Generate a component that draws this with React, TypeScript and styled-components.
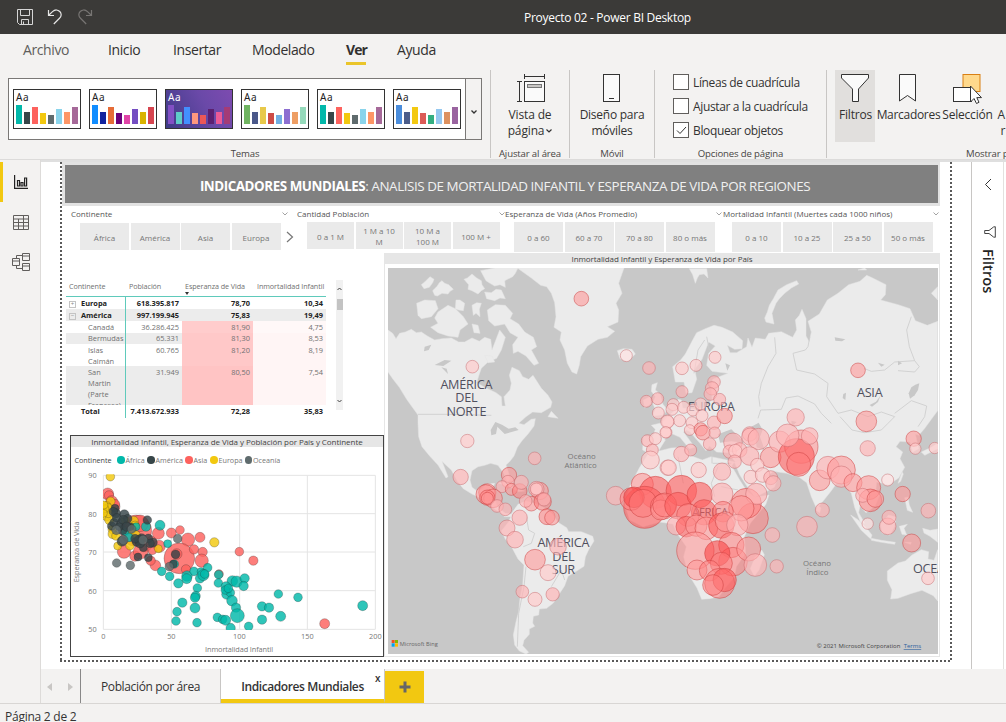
import React from "react";
import styled, { createGlobalStyle } from "styled-components";

const Global = createGlobalStyle`
  * { box-sizing: border-box; }
  body { margin: 0; background: #f3f2f1; font-family: "Open Sans", "Noto Sans", sans-serif; color: #333; overflow: hidden; }
`;

/* ---------- window chrome ---------- */
const Window = styled.div`
  width: 1006px; height: 722px; overflow: hidden; display: flex; flex-direction: column; background: #f3f2f1;
`;
const TitleBar = styled.header`
  height: 34px; flex: none; background: #3b3a38; display: flex; align-items: center; padding-left: 17px; gap: 14px; color: #fff;
`;
const WindowTitle = styled.div`
  margin-left: 417px; font-size: 12px; letter-spacing: -0.28px; white-space: nowrap; line-height: 16px; padding-top: 2px;
`;
const Tabs = styled.nav`
  height: 34px; flex: none; display: flex; padding-left: 23px;
`;
const Tab = styled.div<{ $w: number; $gap: number; $active?: boolean; $dim?: boolean }>`
  width: ${(p) => p.$w}px; margin-right: ${(p) => p.$gap}px; height: 31px; padding-top: 6px; font-size: 14px; line-height: 20px;
  letter-spacing: ${(p) => (p.$active ? -0.9 : -0.4)}px; white-space: nowrap; color: ${(p) => (p.$dim ? "#605e5c" : "#323130")};
  font-weight: ${(p) => (p.$active ? 700 : 400)};
  border-bottom: 3px solid ${(p) => (p.$active ? "#eac52a" : "transparent")};
`;

/* ---------- ribbon ---------- */
const Ribbon = styled.section`
  height: 92px; flex: none; display: flex; overflow: hidden; padding: 2px 0; border-bottom: 1px solid #dcdbda;
`;
const Group = styled.div<{ $w: number; $last?: boolean }>`
  width: ${(p) => p.$w}px; flex: none; height: 88px; display: flex; flex-direction: column; align-items: center;
  border-right: 1px solid ${(p) => (p.$last ? "transparent" : "#c8c6c4")};
`;
const GroupBody = styled.div<{ $pull?: number }>`
  height: 76px; flex: none; width: 100%; display: flex; justify-content: center; position: relative; left: ${(p) => p.$pull ?? 0}px;
`;
const GroupLabel = styled.div<{ $left?: number; $ls?: number }>`
  margin-top: 1px; font-size: 9.6px; line-height: 14px; letter-spacing: ${(p) => p.$ls ?? -0.15}px; white-space: nowrap; color: #484644;
  ${(p) => (p.$left ? `align-self: flex-start; margin-left: ${p.$left}px;` : "")}
`;
const Gallery = styled.div`
  margin: 8px 8px 0 8px; width: 474px; height: 62px; border: 1px solid #7a7876; background: #fff; display: flex;
`;
const GalleryCards = styled.div`
  width: 456px; display: flex; gap: 8px; padding: 10px 0 0 4px;
`;
const GalleryMore = styled.div`
  flex: 1; border-left: 1px solid #7a7876; background: #f3f2f1; display: flex; align-items: center; justify-content: center; padding-top: 6px;
`;
const Card = styled.div<{ $dark?: boolean }>`
  width: 68px; height: 40px; border: 1px solid #333; display: flex; flex-direction: column; padding: 1px 2px 4px;
  background: ${(p) => (p.$dark ? "linear-gradient(60deg,#3d3a86,#6a49a8 60%,#7d4bb0)" : "#fff")};
  color: ${(p) => (p.$dark ? "#fff" : "#222")};
`;
const CardText = styled.div`
  font-size: 10px; line-height: 13px; height: 12px; letter-spacing: 0.7px; font-family: "Noto Sans", sans-serif;
`;
const CardBars = styled.div`
  flex: 1; display: flex; align-items: flex-end; gap: 2px;
`;
const CardBar = styled.div<{ $h: number; $c: string }>`
  width: 6px; height: ${(p) => p.$h}px; background: ${(p) => p.$c};
`;
const BigButton = styled.div<{ $w: number; $active?: boolean; $ml?: number }>`
  width: ${(p) => p.$w}px; margin-left: ${(p) => p.$ml ?? 0}px; height: 72px; flex: none; display: flex; flex-direction: column; align-items: center;
  background: ${(p) => (p.$active ? "#e1dfdd" : "transparent")};
  > svg { flex: none; }
`;
const BigLabel = styled.div<{ $ls?: number }>`
  margin-top: 1px; font-size: 12px; line-height: 16px; letter-spacing: ${(p) => p.$ls ?? -0.15}px; text-align: center; white-space: pre; color: #323130;
  svg { vertical-align: 2px; margin-left: -1px; }
`;
const Checks = styled.div`
  width: 100%; padding: 4px 0 0 18px; display: flex; flex-direction: column; gap: 8px;
`;
const CheckRow = styled.div<{ $ls: number }>`
  display: flex; align-items: center; gap: 4px; height: 16px; font-size: 12px; letter-spacing: ${(p) => p.$ls}px; white-space: nowrap;
`;
const CheckBox = styled.span`
  width: 16px; height: 16px; border: 1px solid #605e5c; background: #fff; display: flex; align-items: center; justify-content: center;
`;
const Clip = styled.div`
  flex: none; white-space: pre; font-size: 12px; line-height: 16px; padding-top: 37px; margin-left: 4px;
`;

/* ---------- body ---------- */
const Body = styled.div`
  height: 544px; flex: none; display: flex; border-bottom: 1px solid #d8d6d4;
`;
const Rail = styled.aside`
  width: 41px; flex: none; border-right: 1px solid #dddbd9; display: flex; flex-direction: column; padding-top: 2px;
`;
const RailItem = styled.div<{ $active?: boolean }>`
  height: 40px; display: flex; align-items: center; justify-content: center; padding-right: 3px;
  border-left: 3px solid ${(p) => (p.$active ? "#f2c811" : "transparent")};
  padding-left: 2px;
`;
const Content = styled.div`
  flex: 1; min-width: 0; display: flex; flex-direction: column;
`;
const Work = styled.div`
  height: 509px; display: flex; background: #fff; border-top: 2px solid #dfdfdf;
`;
const Stage = styled.div`
  width: 930px; flex: none; padding-left: 19px;
`;
const PageFrame = styled.div`
  width: 892px; height: 500px; padding: 0 12px 0 2px; display: flex; flex-direction: column;
  background:
    repeating-linear-gradient(180deg, #5a5a5a 0 2px, transparent 2px 4px) left top / 2px 100% no-repeat,
    repeating-linear-gradient(180deg, #5a5a5a 0 2px, transparent 2px 4px) right top / 2px 100% no-repeat,
    repeating-linear-gradient(90deg, #5a5a5a 0 2px, transparent 2px 4px) left bottom / 100% 2px no-repeat;
`;
const BannerBox = styled.div`
  height: 44px; flex: none; background: #e2e2e2; padding: 3px 2px 3px 3px;
`;
const Banner = styled.h1`
  margin: 0; height: 38px; background: #808080; color: #f0f0f0; font-size: 13.4px; font-weight: 400; text-align: center; line-height: 43px;
  letter-spacing: -0.43px; white-space: nowrap; padding-left: 7px;
  b { font-weight: 700; color: #fff; letter-spacing: -0.45px; }
`;
const Slicers = styled.div`
  height: 47px; flex: none; display: flex;
`;
const Slicer = styled.div<{ $w: number }>`
  width: ${(p) => p.$w}px; flex: none; display: flex; flex-direction: column;
`;
const SlicerHead = styled.div<{ $pl: number; $pr: number }>`
  height: 16px; display: flex; justify-content: space-between; align-items: center; padding: 0 ${(p) => p.$pr}px 0 ${(p) => p.$pl}px;
  font-size: 8px; line-height: 16px; white-space: nowrap; color: #555;
`;
const Chips = styled.div<{ $ml: number; $h: number; $mt?: number }>`
  margin: ${(p) => p.$mt ?? 0}px 0 0 ${(p) => p.$ml}px; height: ${(p) => p.$h}px; display: flex; align-items: center; gap: 1.5px;
`;
const Chip = styled.div<{ $w: number }>`
  width: ${(p) => p.$w}px; flex: none; height: 100%; background: #eaeaea; color: #777; font-size: 8px; line-height: 11px; white-space: pre; text-align: center;
  display: flex; align-items: center; justify-content: center; padding-top: 1px;
`;
const Lower = styled.div`
  flex: 1; display: flex;
`;
const LeftCol = styled.div`
  width: 322px; flex: none; display: flex; flex-direction: column; padding: 27px 0 0 4px;
`;

/* ---------- matrix ---------- */
const MatrixBox = styled.div`
  height: 155px; display: flex; gap: 10px;
`;
const Matrix = styled.div`
  width: 260px; height: 138px; display: flex; flex-direction: column;
`;
const MatrixRows = styled.div`
  height: 108px; flex: none; overflow: hidden;
`;
const MRow = styled.div<{ $h: number; $kind?: "head" | "bold" | "total"; $alt?: boolean }>`
  height: ${(p) => p.$h}px; flex: none; display: grid; grid-template-columns: 60px 56px 71px 73px; line-height: 11px;
  font-size: ${(p) => (p.$kind === "head" ? 7.2 : 7.4)}px;
  letter-spacing: ${(p) => (p.$kind === "head" ? -0.07 : 0)}px;
  color: ${(p) => (p.$kind === "bold" || p.$kind === "total" ? "#222" : "#707070")};
  font-weight: ${(p) => (p.$kind === "bold" || p.$kind === "total" ? 700 : 400)};
  border-bottom: ${(p) => (p.$kind === "head" ? "1px solid #5fcabb" : "0")};
  background: ${(p) => (p.$alt ? "#ececec" : "transparent")};
`;
const Cell = styled.div<{ $heat?: string; $name?: boolean; $pl?: number; $head?: boolean }>`
  text-align: ${(p) => (p.$name || p.$head ? "left" : "right")}; white-space: pre; background: ${(p) => p.$heat ?? "transparent"};
  padding: 0.5px ${(p) => (p.$head ? 0 : 3)}px 0 ${(p) => p.$pl ?? 0}px;
  border-right: ${(p) => (p.$name ? "1px solid #5fcabb" : "0")};
  display: ${(p) => (p.$name ? "flex" : "block")}; gap: 5px;
`;
const Expander = styled.span`
  width: 7px; height: 7px; margin-top: 3px; border: 1px solid #c4c4c4; font-size: 6px; line-height: 4.5px; color: #888; text-align: center; font-weight: 400;
`;
const SortMark = styled.div`
  width: 0; height: 0; border: 2px solid transparent; border-top: 3px solid #333; border-bottom: 0;
`;
const ScrollBar = styled.div`
  width: 7px; height: 130px; background: #f1f1f1; display: flex; flex-direction: column; align-items: center; padding: 7px 0 7px; gap: 8px;
`;
const Thumb = styled.div`
  width: 6px; height: 11px; background: #c3c3c3; margin-bottom: auto;
`;

/* ---------- charts ---------- */
const VisualTitle = styled.div<{ $ls?: number }>`
  height: 11px; flex: none; background: #e6e6e6; text-align: center; font-size: 8px; line-height: 12px; color: #444; white-space: nowrap; letter-spacing: ${(p) => p.$ls ?? 0}px;
`;
const ScatterBox = styled.div`
  margin-left: 4px; width: 314px; height: 222px; border: 1px solid #444; display: flex; flex-direction: column; background: #fff;
`;
const Legend = styled.div`
  height: 21px; padding: 5px 0 0 3.5px; display: flex; align-items: center; font-size: 7.2px; color: #777; line-height: 12px;
  b { font-weight: 400; width: 42.5px; color: #444; font-size: 7.2px; }
`;
const LegendItem = styled.span<{ $c: string; $w: number }>`
  width: ${(p) => p.$w}px; display: flex; align-items: center; gap: 1px; white-space: nowrap;
  &::before { content: ""; width: 7.5px; height: 7.5px; border-radius: 50%; background: ${(p) => p.$c}; flex: none; }
`;
const MapBox = styled.div`
  width: 556px; height: 404px; display: flex; flex-direction: column; border: 1px solid #e6e6e6; border-top: 0;
  svg { margin: 3.5px 0 0 2.5px; }
`;

/* ---------- filter pane, page tabs, status ---------- */
const FilterPane = styled.div`
  width: 33px; border-left: 1px solid #c8c6c4; border-right: 1px solid #e3e1df; display: flex; flex-direction: column; align-items: center; padding-top: 16px;
`;
const Funnel = styled.svg`
  margin: 35px 0 0 4px; flex: none;
`;
const FilterTitle = styled.div`
  writing-mode: vertical-rl; font-size: 14.5px; font-weight: 600; line-height: 18px; margin-top: 11px; letter-spacing: 0.1px; color: #252423;
`;
const PageTabs = styled.div`
  height: 34px; display: flex;
`;
const Arrows = styled.div`
  width: 40px; border-right: 1px solid #888; display: flex; align-items: center; justify-content: space-between; padding: 2px 6px 0 5px;
`;
const PageTab = styled.div<{ $w: number; $active?: boolean }>`
  width: ${(p) => p.$w}px; position: relative; display: flex; align-items: center; justify-content: center; font-size: 12px; white-space: nowrap;
  padding-top: ${(p) => (p.$active ? 4 : 1)}px;
  letter-spacing: ${(p) => (p.$active ? -0.4 : -0.35)}px; font-weight: ${(p) => (p.$active ? 600 : 400)};
  background: ${(p) => (p.$active ? "#fff" : "#f3f2f1")}; border-right: 1px solid #c8c6c4;
  border-bottom: ${(p) => (p.$active ? "4px solid #f2c811" : "0")};
`;
const CloseMark = styled.span`
  position: absolute; right: 4px; top: 2px; font-size: 10px; line-height: 14px; font-weight: 600;
`;
const AddPage = styled.div`
  width: 39px; height: 32px; margin-top: 2px; background: #f2c811; display: flex; align-items: center; justify-content: center;
`;
const Status = styled.footer`
  height: 18px; padding: 4px 0 0 5px; font-size: 12px; line-height: 18px; letter-spacing: -0.25px; white-space: nowrap;
`;

/* ---------- data ---------- */
const heights = [19, 12, 17, 11, 9, 15, 12, 17];
const themes: { c: string[]; dark?: boolean }[] = [
  { c: ["#01b8aa", "#374649", "#fd625e", "#f2c80f", "#5f6b6d", "#8ad4eb", "#fe9666", "#a66999"] },
  { c: ["#118dff", "#12239e", "#e66c37", "#6b007b", "#e044a7", "#744ec2", "#d9b300", "#d64550"] },
  { c: ["#8250c4", "#5ecbc8", "#438fff", "#ff977e", "#eb5757", "#5b2071", "#ec5a96", "#a43b76"], dark: true },
  { c: ["#70b461", "#4a588a", "#e8c94a", "#cd4c46", "#71afe2", "#8d6fd1", "#ee9e64", "#95dabb"] },
  { c: ["#01b8aa", "#374649", "#fd625e", "#f2c80f", "#5f6b6d", "#8ad4eb", "#fe9666", "#a66999"] },
  { c: ["#4a8ddc", "#4c5d8a", "#f3c911", "#dc5b57", "#33ae81", "#95c8f0", "#dd915f", "#9a64a0"] },
];

type Pt = [number, number, number];
const teal = "#01b8aa", dark = "#374649", red = "#fd625e", yellow = "#f2c80f", grey = "#5f6b6d";
const scatter: { c: string; p: Pt[] }[] = [
  { c: red, p: [[143, 192, 18], [147, 196, 14], [155, 215, 18], [160, 230, 20], [165, 222, 14], [228, 302, 47], [240, 280, 25], [192, 365, 20], [225, 378, 16], [256, 345, 20], [275, 335, 16], [295, 310, 18], [298, 349, 18], [286, 406, 16], [272, 392, 14], [334, 309, 15], [360, 300, 13], [384, 329, 20], [420, 322, 15], [358, 385, 46], [402, 358, 14], [428, 366, 14], [425, 392, 20], [378, 418, 14], [538, 365, 13], [580, 392, 14], [794, 581, 15], [277, 360, 14], [477, 432, 13], [242, 365, 22], [350, 372, 16]] },
  { c: yellow, p: [[151, 140, 13], [152, 214, 13], [140, 228, 13], [136, 245, 13], [145, 235, 14], [140, 260, 13], [148, 270, 14], [145, 250, 13], [135, 236, 12], [157, 298, 13], [158, 312, 14], [168, 318, 13], [173, 348, 12], [222, 272, 13], [215, 300, 13], [228, 315, 13], [210, 347, 13], [295, 356, 12], [463, 337, 14], [225, 285, 12], [195, 270, 12], [130, 250, 12], [132, 225, 12]] },
  { c: teal, p: [[300, 286, 15], [258, 290, 14], [228, 290, 12], [195, 305, 12], [207, 322, 13], [323, 341, 12], [305, 424, 13], [329, 439, 13], [381, 438, 16], [380, 446, 15], [402, 424, 13], [343, 402, 13], [355, 460, 14], [412, 474, 13], [420, 445, 14], [423, 425, 12], [443, 413, 13], [430, 435, 17], [434, 432, 13], [407, 498, 14], [405, 503, 14], [367, 518, 14], [351, 545, 13], [348, 573, 13], [405, 534, 15], [411, 578, 13], [476, 434, 13], [475, 459, 13], [517, 453, 16], [530, 455, 17], [554, 445, 14], [551, 468, 14], [498, 470, 15], [500, 493, 15], [511, 488, 13], [516, 512, 16], [528, 533, 14], [532, 557, 21], [472, 562, 13], [488, 568, 13], [497, 571, 15], [512, 594, 14], [566, 589, 13], [606, 569, 14], [606, 529, 14], [627, 533, 14], [655, 492, 13], [714, 502, 13], [662, 559, 15], [908, 527, 15], [496, 480, 13], [505, 475, 13]] },
  { c: dark, p: [[165, 235, 12], [168, 250, 14], [160, 245, 13], [193, 253, 14], [203, 266, 13], [155, 288, 13], [162, 278, 13], [185, 280, 15], [170, 263, 13], [188, 300, 14], [210, 290, 12], [186, 334, 15], [190, 270, 14], [262, 270, 13], [245, 325, 14], [230, 335, 14], [238, 330, 15], [278, 338, 14], [250, 353, 12], [265, 325, 13], [234, 381, 12], [265, 383, 12], [347, 373, 13], [340, 402, 12], [178, 290, 12], [240, 340, 14], [270, 340, 13], [225, 326, 13], [200, 290, 14]] },
  { c: grey, p: [[353, 326, 13], [170, 399, 13], [211, 406, 13], [169, 300, 14], [215, 297, 13], [328, 410, 13], [249, 330, 14], [190, 330, 14]] },
];

/* Bubbles of the map: x, y, radius, shade. */
type Bubble = [number, number, number, number];
const at = (dx: number, dy: number, list: Bubble[]): Bubble[] => list.map(([x, y, r, o]) => [x + dx, y + dy, r, o]);
const bubbles: Bubble[] = [
  ...at(0, 0, [[590, 146, 22, 3], [725, 317, 18, 0], [793, 354, 19, 2], [263, 350, 19, 1], [248, 573, 20, 1], [450, 625, 19, 2], [785, 454, 18, 2], [819, 446, 18, 2], [821, 489, 18, 1], [849, 515, 18, 1], [845, 547, 17, 1], [788, 572, 18, 2], [812, 566, 18, 1], [803, 600, 18, 2], [797, 630, 27, 1]]),
  ...at(0, 615, [[228, 66, 23, 2], [373, 60, 23, 3], [370, 80, 19, 2], [352, 95, 18, 2], [380, 103, 18, 3], [405, 108, 22, 4], [410, 82, 21, 2], [465, 108, 26, 3], [455, 102, 23, 2], [440, 146, 22, 3], [474, 140, 26, 4], [455, 102, 18, 1], [478, 133, 20, 2], [423, 138, 19, 2], [308, 112, 26, 4], [303, 118, 29, 3], [325, 130, 28, 3], [308, 128, 23, 4], [308, 130, 18, 3], [337, 153, 19, 2], [362, 163, 19, 2], [405, 188, 23, 2], [367, 219, 24, 2], [391, 254, 25, 2], [487, 185, 24, 4], [502, 188, 22, 3], [520, 275, 25, 2], [451, 314, 31, 3], [490, 353, 24, 1], [413, 410, 19, 2], [451, 433, 21, 1], [504, 418, 20, 2], [849, 38, 23, 1], [693, 122, 28, 2], [773, 88, 33, 3], [812, 112, 48, 5], [780, 157, 63, 5], [740, 132, 34, 4], [748, 127, 31, 6], [775, 145, 42, 4], [835, 155, 38, 4], [828, 165, 30, 3]]),
  ...at(840, 0, [[52, 355, 19, 1], [94, 346, 18, 1], [151, 322, 18, 1], [148, 396, 19, 2], [142, 415, 20, 2], [137, 432, 19, 2], [52, 425, 18, 2], [165, 448, 18, 2], [26, 464, 18, 1], [22, 478, 18, 1], [57, 472, 18, 1], [85, 480, 18, 1], [45, 512, 18, 1], [8, 515, 20, 1], [82, 518, 18, 1], [3, 547, 17, 1], [75, 540, 16, 1], [112, 497, 18, 1], [108, 462, 18, 1], [148, 518, 20, 2], [180, 498, 23, 3], [108, 538, 20, 3], [115, 548, 22, 3], [150, 548, 17, 2], [135, 582, 19, 2], [50, 612, 23, 2], [78, 600, 18, 2], [205, 577, 28, 2], [195, 605, 20, 2], [225, 600, 22, 2], [212, 603, 20, 1], [255, 552, 22, 2], [257, 560, 26, 2], [282, 567, 32, 2], [255, 618, 28, 2], [318, 622, 31, 3], [345, 575, 32, 2], [410, 590, 50, 3], [395, 620, 54, 5], [369, 556, 34, 2], [435, 558, 25, 2], [402, 643, 36, 4], [393, 502, 26, 2], [605, 514, 31, 3], [609, 595, 23, 2], [580, 361, 22, 3], [747, 566, 23, 3], [752, 596, 17, 1], [810, 594, 17, 1]]),
  ...at(840, 615, [[12, 38, 23, 1], [102, 45, 23, 1], [172, 50, 26, 2], [210, 20, 20, 2], [278, 30, 20, 1], [258, 66, 20, 1], [294, 60, 22, 1], [318, 68, 21, 2], [326, 85, 23, 2], [465, 76, 31, 3], [490, 38, 34, 2], [530, 45, 42, 3], [530, 65, 32, 2], [565, 83, 27, 3], [612, 98, 36, 3], [617, 136, 34, 4], [594, 121, 21, 2], [632, 132, 25, 3], [669, 75, 18, 0], [714, 117, 23, 3], [791, 167, 22, 2], [473, 165, 21, 2], [427, 215, 31, 2], [323, 240, 22, 2], [336, 334, 20, 2], [669, 214, 25, 2], [673, 187, 21, 2], [609, 206, 17, 0], [741, 264, 27, 3], [790, 370, 19, 1],
    [50, 107, 46, 5], [0, 150, 36, 4], [40, 152, 40, 5], [105, 120, 38, 5], [172, 117, 33, 2], [265, 190, 46, 4], [245, 145, 45, 4], [275, 117, 32, 2], [230, 160, 38, 3], [118, 172, 38, 5], [70, 180, 34, 4], [175, 170, 31, 4], [35, 212, 28, 2], [65, 215, 31, 5], [95, 212, 32, 3], [125, 220, 34, 3], [170, 212, 38, 5], [182, 200, 30, 3], [218, 210, 32, 2], [92, 287, 56, 3], [200, 270, 38, 4], [205, 320, 43, 4], [158, 295, 38, 6], [170, 325, 33, 4], [252, 282, 36, 3], [272, 330, 34, 2], [97, 345, 30, 3], [135, 347, 31, 4], [165, 385, 45, 4], [180, 375, 35, 5], [145, 390, 31, 4]]),
];
const shades: [string, number][] = [
  ["#ffe2e2", 0.7], ["#ffcccc", 0.7], ["#ffb2b4", 0.65], ["#ff9a9a", 0.6], ["#ff7e7e", 0.55], ["#ff5c5c", 0.6], ["#fb4444", 0.6],
];

/* Coastlines, each group drawn from its own corner of the world. */
const land: { dx: number; dy: number; d: string[] }[] = [
  {
    dx: 0, dy: 0,
    d: [
      "M10 240 L24 250 34 266 45 250 62 246 80 238 95 248 110 246 128 258 150 270 172 266 200 264 222 276 240 276 262 264 284 274 300 262 318 268 322 300 345 240 362 262 350 300 336 325 310 336 290 355 282 378 276 398 300 412 334 428 350 440 352 468 362 468 358 440 376 420 380 400 374 376 382 352 404 362 414 380 432 388 445 376 458 396 470 415 490 436 502 456 498 472 470 488 444 486 424 500 402 520 418 524 440 508 452 506 448 528 430 552 412 572 398 592 388 618 374 636 364 645 372 668 376 688 368 694 356 668 340 646 318 640 300 646 280 650 262 662 256 690 262 712 276 722 292 716 304 702 330 700 320 724 312 735 330 750 340 772 362 790 380 792 396 770 388 800 360 800 338 782 314 766 292 746 262 732 236 716 218 694 200 660 178 640 172 634 190 680 184 684 160 645 135 618 112 590 102 560 100 520 100 495 82 470 66 448 44 412 24 386 10 366 Z",
      "M398 54 L440 84 468 106 486 110 500 130 510 158 514 200 508 232 530 246 526 270 540 300 548 340 562 366 576 372 584 345 588 320 608 288 640 268 668 262 690 244 668 230 700 216 702 180 694 160 712 130 702 100 718 54 Z",
      "M96 160 L120 150 152 152 160 176 140 200 110 206 100 196 Z",
      "M160 186 L190 166 212 176 236 200 250 222 226 240 220 262 190 258 160 248 138 232 160 220 150 204 Z",
      "M110 104 L120 96 136 80 148 88 144 98 134 112 118 116 Z M144 122 L158 108 164 98 172 92 180 100 192 104 206 118 196 124 190 132 172 130 158 138 150 136 Z M238 88 L248 84 262 72 276 84 290 92 292 104 300 116 290 122 280 132 262 122 250 118 252 104 Z M214 150 L226 150 240 160 236 182 222 180 212 176 Z M262 166 L276 158 290 160 284 178 286 200 274 190 266 196 Z",
      "M288 62 L330 54 400 54 392 70 384 80 360 92 362 112 346 104 330 108 316 100 304 92 Z M300 126 L320 128 334 118 350 120 362 146 346 144 330 152 306 146 Z",
      "M308 180 L332 164 362 166 384 190 376 206 402 222 420 246 446 262 456 290 440 300 462 340 448 346 424 318 400 304 386 310 384 284 400 262 376 248 360 222 330 228 312 212 Z",
      "M262 222 L280 226 286 250 268 248 Z M300 316 L322 318 330 336 310 338 Z M490 500 L500 484 520 505 Z",
      "M698 302 L716 296 742 298 752 312 730 334 706 326 Z",
      "M802 404 L818 398 812 420 826 432 834 462 848 478 838 494 804 498 812 478 804 460 812 440 800 424 Z M776 450 L796 440 798 462 780 474 Z",
    ],
  },
  {
    dx: 0, dy: 615,
    d: [
      "M385 170 L400 148 424 138 452 146 480 158 502 176 520 202 546 218 552 230 590 230 624 244 628 258 612 284 602 306 598 334 570 352 550 364 540 392 518 426 506 444 486 460 464 462 462 480 446 484 444 504 450 514 434 522 434 538 418 556 414 572 432 592 424 597 404 588 390 570 386 540 394 500 402 470 406 430 414 390 418 330 400 312 382 278 362 252 350 228 372 200 Z",
      "M340 84 L366 82 400 100 420 108 400 110 372 94 Z",
    ],
  },
  {
    dx: 840, dy: 0,
    d: [
      "M24 350 L48 330 62 312 84 270 96 248 122 236 148 226 172 232 204 246 234 272 232 296 210 298 188 286 196 308 216 308 246 290 250 264 262 292 272 264 302 268 312 250 350 245 384 262 396 240 392 210 404 196 412 178 424 206 424 258 434 276 440 246 430 214 464 192 488 150 520 130 552 104 586 94 606 76 624 84 664 104 662 134 648 150 700 164 736 176 752 212 788 226 819 214 819 482 800 508 778 538 762 556 752 552 762 596 744 606 736 576 706 574 694 590 714 606 706 626 720 652 702 684 672 704 636 696 634 716 644 738 630 770 604 788 586 768 582 788 600 820 588 818 570 772 560 730 536 702 516 700 500 722 470 760 456 776 440 740 426 698 404 682 366 670 326 664 304 682 270 650 245 632 212 635 190 608 156 606 134 588 124 602 106 580 90 562 76 545 66 540 56 546 76 572 90 592 74 596 46 562 24 552 0 568 -36 562 -28 538 -40 526 -8 518 18 492 38 474 40 448 50 450 54 474 96 478 126 470 142 446 140 412 144 388 190 370 142 364 126 346 132 310 152 288 132 276 112 328 90 358 96 388 82 428 64 430 58 396 32 396 Z",
      "M-64 558 L-10 562 2 570 -18 602 -50 608 -66 600 Z",
      "M304 216 L300 204 308 186 314 166 326 146 340 120 366 104 396 92 402 102 380 114 360 130 344 146 334 160 322 190 328 222 Z",
      "M74 56 L84 74 92 100 98 84 104 74 118 72 130 84 126 56 Z M800 130 L819 110 819 150 Z M580 60 L600 54 606 60 Z",
      "M770 606 L800 592 819 580 819 596 780 616 Z M700 700 L712 666 716 672 708 694 Z",
    ],
  },
  {
    dx: 765, dy: 390,
    d: [
      "M30 215 L62 212 94 204 140 202 150 226 188 240 214 230 262 240 284 246 276 258 300 300 322 334 346 352 388 345 378 374 332 430 314 470 318 520 290 560 284 592 258 622 238 650 210 656 186 658 172 624 146 582 132 530 140 500 112 460 100 432 60 426 10 440 -30 420 -46 370 -30 320 0 262 Z",
      "M284 246 L330 230 350 262 384 285 410 305 404 322 370 340 346 352 324 322 300 284 Z",
      "M366 510 L374 524 358 570 344 588 332 566 346 532 Z",
      "M532 374 L544 384 540 398 530 392 Z",
    ],
  },
  {
    dx: 840, dy: 615,
    d: [
      "M668 348 L700 324 722 318 742 300 770 284 792 290 790 312 808 316 819 284 819 438 806 422 772 406 738 416 700 430 678 432 682 404 668 376 Z",
      "M558 180 L580 194 606 220 622 240 618 252 590 226 Z M620 250 L650 256 692 262 690 268 650 262 620 256 Z M648 206 L672 180 694 186 690 214 676 240 652 234 Z M704 214 L728 208 718 220 726 240 712 238 Z M774 220 L796 226 819 222 819 262 796 244 778 234 Z M720 128 L730 126 734 150 744 172 728 166 Z M720 262 L740 262 738 268 Z",
    ],
  },
];
const seas = [
  "M1000 553 L1020 545 1040 538 1062 560 1078 578 1040 574 1006 578 Z",
  "M1100 530 L1122 518 1134 540 1126 560 1140 600 1116 592 1112 560 Z",
  "M1580 412 L1592 404 1604 400 1600 420 1590 436 1576 446 1572 430 Z",
  "M1455 465 L1474 455 1488 436 1480 456 1462 470 Z",
  "M318 540 L332 516 352 524 372 536 392 532 402 540 360 552 338 530 334 552 320 556 Z",
  "M120 290 L140 284 132 300 118 304 Z M150 345 L180 330 200 332 176 348 Z M190 372 L170 352 186 356 Z",
  "M1350 262 L1382 268 1372 274 1352 272 Z M1376 432 L1384 428 1382 450 1374 444 Z M1022 340 L1036 346 1028 362 Z M1220 512 L1236 516 1222 528 Z",
  "M1480 338 L1500 344 1490 350 Z M1540 332 L1552 340 1540 346 Z",
];
const borders = [
  "M100 493 H190 L320 496",
  "M1120 505 L1128 480 1190 478 1204 444 1240 438 1290 462 1310 490 1340 520",
  "M1225 310 L1262 300 1270 290 1275 262",
  "M1225 310 L1236 360 1290 372 1330 400 1326 440 1360 490 1400 480 1450 500 1490 486 1530 500 1510 520 1490 540 1440 548 1402 540 1366 500",
  "M1580 200 L1566 240 1574 290 1590 332 1530 336 1500 360 1460 364 1440 356",
  "M1590 332 L1604 350 1590 366 1540 362",
  "M1530 490 L1580 452 1626 468 1620 500 1600 530",
  "M1170 262 L1174 310 1150 350 1130 400 1122 440 1126 470",
  "M966 260 L974 300 M928 370 L940 300 960 270 M982 600 V640 M880 620 L896 700 M984 640 H1040",
  "M425 800 L432 840 450 850 440 880 416 890 M424 950 L418 1010 402 1090 398 1190 M500 1010 L530 960 540 990",
  "M1010 710 L1060 720 M1000 650 L980 700 990 740",
];

const columns = ["Continente", "Población", "Esperanza de Vida", "Inmortalidad Infantil"];
const rows: { n: string; h: number; v: string[]; bold?: "+" | "−"; alt?: boolean; heat?: [string, string] }[] = [
  { n: "Europa", h: 12, v: ["618.395.817", "78,70", "10,34"], bold: "+" },
  { n: "América", h: 12, v: ["997.199.945", "75,83", "19,49"], bold: "−", alt: true },
  { n: "Canadá", h: 11.5, v: ["36.286.425", "81,90", "4,75"], heat: ["#ffcccc", "#fff8f8"] },
  { n: "Bermudas", h: 11.5, v: ["65.331", "81,30", "8,53"], alt: true, heat: ["#ffc8c8", "#fff5f5"] },
  { n: "Islas\nCaimán", h: 22, v: ["60.765", "81,20", "8,19"], heat: ["#ffc8c8", "#fff5f5"] },
  { n: "San\nMartin\n(Parte\nFrancesa)", h: 44, v: ["31.949", "80,50", "7,54"], alt: true, heat: ["#ffc4c4", "#fff5f5"] },
];

/* ---------- small drawings ---------- */
const Chevron = ({ w = 6, c = "#888", sw = 0.9 }: { w?: number; c?: string; sw?: number }) => (
  <svg width={w} height={w / 2 + 1} viewBox="0 0 6 4" fill="none" stroke={c} strokeWidth={sw}><path d="M0.5 0.5 L3 3 L5.5 0.5" /></svg>
);
const SaveIcon = () => (
  <svg width="16" height="16" viewBox="0 0 16 16" fill="none" stroke="#d6d6d6"><path d="M.5.5H15.500V15.500H2.500L.5 13.500ZM3.500.5V6.500H12.500V.5M4.500 15V10.500H11.500V15M6.500 12.500V15" /></svg>
);
const UndoIcon = ({ flip }: { flip?: boolean }) => (
  <svg width="16" height="16" viewBox="0 0 16 16" fill="none" stroke={flip ? "#777573" : "#e6e6e6"} strokeWidth="1.200">
    <g transform={flip ? "translate(16 0) scale(-1 1)" : undefined}><path d="M1.500 1V6.500H7M1.700 6.300L5.500 2.600C8 .3 11 .6 12.800 2.500C14.800 4.600 14.500 7.500 12.500 9.300L6.800 15" /></g>
  </svg>
);

function MapView() {
  return (
    <svg width="550" height="386" viewBox="10 54 1650 1158" preserveAspectRatio="none">
      <rect x="10" y="54" width="1650" height="1158" fill="#c8c8c8" />
      {land.map((g, i) => (
        <g key={i} transform={`translate(${g.dx} ${g.dy})`} fill="#ebebeb" stroke="#e4e4e4" strokeWidth="1.500" strokeLinejoin="round">
          {g.d.map((d, j) => <path key={j} d={d} />)}
        </g>
      ))}
      {seas.map((d, i) => <path key={i} d={d} fill="#c8c8c8" />)}
      {borders.map((d, i) => <path key={i} d={d} fill="none" stroke="#cccccc" strokeWidth="2.500" />)}
      <g fill="#50505e" textAnchor="middle" fontSize="38" letterSpacing="-0.800">
        <text x="245" y="417">AMÉRICA</text><text x="245" y="457">DEL</text><text x="245" y="497">NORTE</text>
        <text x="536" y="892">AMÉRICA</text><text x="536" y="932">DEL</text><text x="536" y="972">SUR</text>
        <text x="980" y="482" fontSize="37">EUROPA</text><text x="1455" y="441">ASIA</text>
        <text x="976" y="798" fontSize="34">ÁFRICA</text>
        <text x="1585" y="969" textAnchor="start">OCEANÍA</text>
      </g>
      <g fill="#777" textAnchor="middle" fontSize="23.500">
        <text x="591" y="626">Océano</text><text x="588" y="654">Atlántico</text>
        <text x="1297" y="948">Océano</text><text x="1298" y="975">Índico</text>
      </g>
      {bubbles.map(([x, y, r, o], i) => (
        <circle key={i} cx={x} cy={y} r={r} fill={shades[o][0]} fillOpacity={shades[o][1]} stroke={o < 3 ? "#c4686c" : "#c93c3c"} strokeOpacity="0.600" strokeWidth="2.400" />
      ))}
      <rect x="21" y="1170" width="9" height="9" fill="#f25022" /><rect x="31" y="1170" width="9" height="9" fill="#7fba00" />
      <rect x="21" y="1180" width="9" height="10" fill="#00a4ef" /><rect x="31" y="1180" width="9" height="10" fill="#ffb900" />
      <text x="45" y="1188" fontSize="17" fill="#666">Microsoft Bing</text>
      <text x="1296" y="1194" fontSize="18" fill="#444">© 2021 Microsoft Corporation</text>
      <text x="1557" y="1194" fontSize="18" fill="#2c5f9e" textDecoration="underline">Terms</text>
    </svg>
  );
}

function ScatterPlot() {
  return (
    <svg width="312" height="187" viewBox="33 114 936 561">
      <clipPath id="plot"><rect x="129" y="133" width="820" height="467" /></clipPath>
      <g stroke="#e4e4e4" strokeWidth="3">
        {[136, 251, 366, 482, 598].map((y) => <path key={y} d={`M130 ${y}H946`} />)}
        {[130, 334, 539, 742, 946].map((x) => <path key={x} d={`M${x} 136V598`} />)}
      </g>
      <g clipPath="url(#plot)">
        {scatter.map((s) => s.p.map(([x, y, r], i) => (
          <circle key={s.c + i} cx={x} cy={y} r={r} fill={s.c} fillOpacity="0.820" stroke="#222" strokeOpacity="0.350" strokeWidth="2.200" />
        )))}
      </g>
      <g fill="#777" fontSize="22">
        {[90, 80, 70, 60, 50].map((v, i) => <text key={v} x="110" y={144 + i * 115.5} textAnchor="end">{v}</text>)}
        {[0, 50, 100, 150, 200].map((v, i) => <text key={v} x={130 + i * 204} y="627" textAnchor="middle">{v}</text>)}
        <text x="537" y="667" textAnchor="middle" letterSpacing="-0.300">Inmortalidad Infantil</text>
        <text transform="translate(58 366) rotate(-90)" textAnchor="middle" letterSpacing="-0.300">Esperanza de Vida</text>
      </g>
    </svg>
  );
}

function SlicerView(p: { w: number; title: string; pl: number; pr: number; ml: number; h: number; mt?: number; chips: [string, number][]; more?: boolean }) {
  return (
    <Slicer $w={p.w}>
      <SlicerHead $pl={p.pl} $pr={p.pr}>{p.title}<Chevron c="#999" /></SlicerHead>
      <Chips $ml={p.ml} $h={p.h} $mt={p.mt}>
        {p.chips.map(([t, w]) => <Chip key={t} $w={w}>{t}</Chip>)}
        {p.more && <svg width="15" height="14" viewBox="0 0 15 14" fill="none" stroke="#777" strokeWidth="1.200"><path d="M5 2L10.500 7L5 12" /></svg>}
      </Chips>
    </Slicer>
  );
}

export default function App() {
  return (
    <Window>
      <Global />
      <TitleBar>
        <SaveIcon /><UndoIcon /><UndoIcon flip />
        <WindowTitle>Proyecto 02 - Power BI Desktop</WindowTitle>
      </TitleBar>
      <Tabs>
        <Tab $w={46} $gap={39} $dim>Archivo</Tab>
        <Tab $w={33} $gap={32}>Inicio</Tab>
        <Tab $w={47} $gap={32}>Insertar</Tab>
        <Tab $w={62} $gap={32}>Modelado</Tab>
        <Tab $w={20} $gap={31} $active>Ver</Tab>
        <Tab $w={40} $gap={0}>Ayuda</Tab>
      </Tabs>
      <Ribbon>
        <Group $w={491}>
          <GroupBody>
            <Gallery>
              <GalleryCards>
                {themes.map((t, i) => (
                  <Card key={i} $dark={t.dark}>
                    <CardText>Aa</CardText>
                    <CardBars>{t.c.map((c, j) => <CardBar key={j} $c={c} $h={heights[j]} />)}</CardBars>
                  </Card>
                ))}
              </GalleryCards>
              <GalleryMore><Chevron w={6} c="#333" sw={1.3} /></GalleryMore>
            </Gallery>
          </GroupBody>
          <GroupLabel>Temas</GroupLabel>
        </Group>
        <Group $w={79}>
          <GroupBody>
            <BigButton $w={70}>
              <svg width="30" height="36" viewBox="0 0 30 36" fill="none" stroke="#333"><path d="M9.500 4V9M29.500 4V9M9.500 6.500H29.500M2 11.500H7M2 31.500H7M4.500 11.500V31.500" /><rect x="9.500" y="11.500" width="20" height="20" fill="#fafafa" /><rect x="12.500" y="14.500" width="14" height="3" fill="#c8c6c4" stroke="#777" /></svg>
              <BigLabel>{"Vista de\npágina "}<Chevron w={6} c="#333" sw={1.2} /></BigLabel>
            </BigButton>
          </GroupBody>
          <GroupLabel>Ajustar al área</GroupLabel>
        </Group>
        <Group $w={85}>
          <GroupBody>
            <BigButton $w={80}>
              <svg width="18" height="36" viewBox="0 0 18 36" fill="none" stroke="#333"><rect x=".5" y="4.500" width="16" height="27" fill="#fafafa" /><path d="M6 28.500H11" /></svg>
              <BigLabel $ls={-0.25}>{"Diseño para\nmóviles"}</BigLabel>
            </BigButton>
          </GroupBody>
          <GroupLabel>Móvil</GroupLabel>
        </Group>
        <Group $w={172}>
          <GroupBody>
            <Checks>
              <CheckRow $ls={-0.36}><CheckBox />Líneas de cuadrícula</CheckRow>
              <CheckRow $ls={-0.36}><CheckBox />Ajustar a la cuadrícula</CheckRow>
              <CheckRow $ls={-0.36}><CheckBox><svg width="11" height="9" viewBox="0 0 11 9" fill="none" stroke="#333"><path d="M1 4.500L4 7.500L10 1" /></svg></CheckBox>Bloquear objetos</CheckRow>
            </Checks>
          </GroupBody>
          <GroupLabel>Opciones de página</GroupLabel>
        </Group>
        <Group $w={200} $last>
          <GroupBody $pull={-2}>
            <BigButton $w={40} $active $ml={-8}>
              <svg width="30" height="36" viewBox="0 0 30 36" fill="#fafafa" stroke="#333"><path d="M1.500 4.500H28.500V8L18.500 19V31.500H12.500V19L1.500 8Z" /></svg>
              <BigLabel $ls={-0.2}>Filtros</BigLabel>
            </BigButton>
            <BigButton $w={66}>
              <svg width="18" height="36" viewBox="0 0 18 36" fill="#fafafa" stroke="#333"><path d="M.5 4.500H16.500V31L8.500 25.500L.5 31Z" /></svg>
              <BigLabel $ls={-0.3}>Marcadores</BigLabel>
            </BigButton>
            <BigButton $w={52}>
              <svg width="30" height="36" viewBox="0 0 30 36" fill="none" stroke="#333"><rect x="11" y="4.500" width="17" height="17" fill="#ffd98c" stroke="#d98014" /><rect x="1.500" y="17.500" width="18" height="14" fill="#fff" /><path d="M18.500 16V32L22 28.500L24.500 33.500L27 32.300L24.800 27.600H29.500Z" fill="#fff" /></svg>
              <BigLabel $ls={-0.2}>Selección</BigLabel>
            </BigButton>
            <Clip>{"A\n r"}</Clip>
          </GroupBody>
          <GroupLabel $left={139}>Mostrar p</GroupLabel>
        </Group>
      </Ribbon>
      <Body>
        <Rail>
          <RailItem $active><svg width="14" height="14" viewBox="0 0 14 14" fill="none" stroke="#222" strokeWidth="1.200"><path d="M.6 0V13.400H14M3.500 11V5.500H5.500V11ZM7 11V7.500H9V11ZM10.600 11V3H12.600V11Z" /></svg></RailItem>
          <RailItem><svg width="16" height="15" viewBox="0 0 16 15" fill="none" stroke="#605e5c"><path d="M.5.5H15.500V14.500H.5ZM.5 4H15.500M.5 7.500H15.500M.5 11H15.500M5.500 4V14.500M10.500.5V14.500" /></svg></RailItem>
          <RailItem><svg width="18" height="18" viewBox="0 0 18 18" fill="none" stroke="#605e5c"><path d="M10.500.5H17.500V7.500H10.500ZM10.500 3H17.500M10.500 10.500H17.500V17.500H10.500ZM10.500 13H17.500M.5 5.500H7.500V12.500H.5ZM.5 8H7.500M4.500 5.500V2.500H10.500M4.500 12.500V15.500H10.500" /></svg></RailItem>
        </Rail>
        <Content>
          <Work>
            <Stage>
              <PageFrame>
                <BannerBox><Banner><b>INDICADORES MUNDIALES</b>: ANALISIS DE MORTALIDAD INFANTIL Y ESPERANZA DE VIDA POR REGIONES</Banner></BannerBox>
                <Slicers>
                  <SlicerView w={235} title="Continente" pl={9} pr={9} ml={18} h={27} mt={1} chips={[["África", 49], ["América", 49], ["Asia", 49], ["Europa", 49]]} more />
                  <SlicerView w={208} title="Cantidad Población" pl={1} pr={-1} ml={10} h={27} chips={[["0 a 1 M", 47], ["1 M a 10\nM", 47], ["10 M a\n100 M", 47], ["100 M +", 47]]} />
                  <SlicerView w={218} title="Esperanza de Vida (Años Promedio)" pl={0} pr={1} ml={9} h={29.5} chips={[["0 a 60", 49], ["60 a 70", 49], ["70 a 80", 49], ["80 o más", 49]]} />
                  <SlicerView w={217} title="Mortalidad Infantil (Muertes cada 1000 niños)" pl={0} pr={1} ml={9} h={29.5} chips={[["0 a 10", 49], ["10 a 25", 49], ["25 a 50", 49], ["50 o más", 49]]} />
                </Slicers>
                <Lower>
                  <LeftCol>
                    <MatrixBox>
                      <Matrix>
                        <MRow $h={17} $kind="head">
                          {columns.map((c, i) => <Cell key={c} $head $pl={[3, 3, 3, 4][i]}>{c}{i === 2 && <SortMark />}</Cell>)}
                        </MRow>
                        <MatrixRows>
                          {rows.map((r) => (
                            <MRow key={r.n} $h={r.h} $kind={r.bold && "bold"} $alt={r.alt}>
                              <Cell $name $pl={r.bold ? 3 : 22}>{r.bold && <Expander>{r.bold}</Expander>}{r.n}</Cell>
                              <Cell>{r.v[0]}</Cell><Cell $heat={r.heat?.[0]}>{r.v[1]}</Cell><Cell $heat={r.heat?.[1]}>{r.v[2]}</Cell>
                            </MRow>
                          ))}
                        </MatrixRows>
                        <MRow $h={12.5} $kind="total">
                          <Cell $name $pl={15}>Total</Cell><Cell>7.413.672.933</Cell><Cell>72,28</Cell><Cell>35,83</Cell>
                        </MRow>
                      </Matrix>
                      <ScrollBar>
                        <svg width="5" height="4" viewBox="0 0 5 4" fill="none" stroke="#444"><path d="M.5 3L2.500 1L4.500 3" /></svg>
                        <Thumb />
                        <svg width="5" height="4" viewBox="0 0 5 4" fill="none" stroke="#444"><path d="M.5 1L2.500 3L4.500 1" /></svg>
                      </ScrollBar>
                    </MatrixBox>
                    <ScatterBox>
                      <VisualTitle $ls={-0.05}>Inmortalidad Infantil, Esperanza de Vida y Población por País y Continente</VisualTitle>
                      <Legend>
                        <b>Continente</b>
                        <LegendItem $c={teal} $w={30}>África</LegendItem>
                        <LegendItem $c={dark} $w={38}>América</LegendItem>
                        <LegendItem $c={red} $w={25}>Asia</LegendItem>
                        <LegendItem $c={yellow} $w={34.5}>Europa</LegendItem>
                        <LegendItem $c={grey} $w={40}>Oceanía</LegendItem>
                      </Legend>
                      <ScatterPlot />
                    </ScatterBox>
                  </LeftCol>
                  <MapBox>
                    <VisualTitle $ls={-0.08}>Inmortalidad Infantil y Esperanza de Vida por País</VisualTitle>
                    <MapView />
                  </MapBox>
                </Lower>
              </PageFrame>
            </Stage>
            <FilterPane>
              <svg width="8" height="13" viewBox="0 0 8 13" fill="none" stroke="#333"><path d="M7 1L1.500 6.500L7 12" /></svg>
              <Funnel width="12" height="12" viewBox="0 0 12 12" fill="none" stroke="#444"><path d="M11.300 .7V11.300L9.500 11L5 7.500H.7V4.500H5L9.500 1Z" /></Funnel>
              <FilterTitle>Filtros</FilterTitle>
            </FilterPane>
          </Work>
          <PageTabs>
            <Arrows>
              <svg width="6" height="8" viewBox="0 0 6 8" fill="#c8c6c4"><path d="M6 0V8L1 4Z" /></svg>
              <svg width="6" height="8" viewBox="0 0 6 8" fill="#c8c6c4"><path d="M0 0V8L5 4Z" /></svg>
            </Arrows>
            <PageTab $w={140}>Población por área</PageTab>
            <PageTab $w={164} $active>Indicadores Mundiales<CloseMark>x</CloseMark></PageTab>
            <AddPage><svg width="12" height="12" viewBox="0 0 12 12" stroke="#666" strokeWidth="3"><path d="M6 .5V11.500M.5 6H11.500" /></svg></AddPage>
          </PageTabs>
        </Content>
      </Body>
      <Status>Página 2 de 2</Status>
    </Window>
  );
}
